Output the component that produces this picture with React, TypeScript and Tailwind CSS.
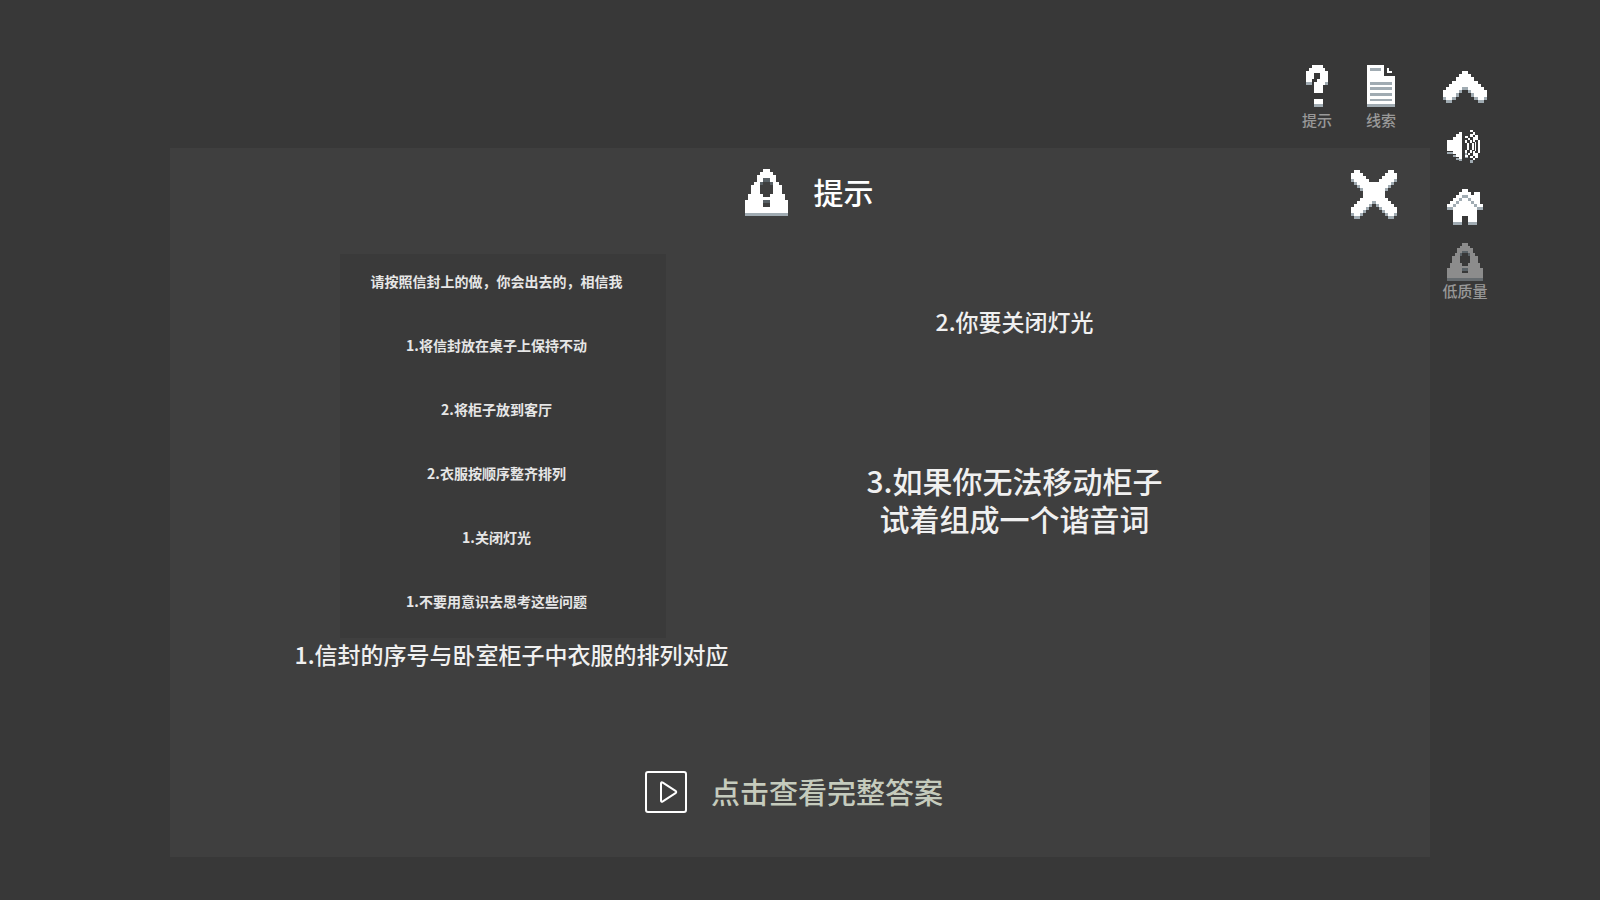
type PixelArtProps = {
  rows: string[];
  className: string;
  main?: string;
  shade?: string;
};

/* Draws a sprite from text rows: "#" is the main colour, "o" the shaded one, "x" the darkest. */
function PixelArt({ rows, className, main = '#ffffff', shade = '#a0abb2' }: PixelArtProps) {
  return (
    <svg
      viewBox={`0 0 ${rows[0].length} ${rows.length}`}
      preserveAspectRatio="none"
      shapeRendering="crispEdges"
      className={className}
      aria-hidden="true"
    >
      {rows.flatMap((row, y) =>
        [...row].map((cell, x) => {
          if (cell === '.') return null;
          const fill = cell === '#' ? main : cell === 'o' ? shade : '#596166';
          return <rect key={`${x}-${y}`} x={x} y={y} width={1} height={1} fill={fill} />;
        }),
      )}
    </svg>
  );
}

const QUESTION = [
  '..####..',
  '.######.',
  '########',
  '###..###',
  '###..###',
  '##..####',
  'oo.####o',
  '...###..',
  '...###..',
  '...###..',
  '........',
  '........',
  '...###..',
  '...###..',
  '...ooo..',
];

const DOCUMENT = [
  '######....',
  '#oooo#.#..',
  '######.##.',
  '######....',
  '##########',
  '##########',
  '#oooooooo#',
  '##########',
  '#oooooooo#',
  '##########',
  '#oooooooo#',
  '##########',
  '#oooooooo#',
  '##########',
  'oooooooooo',
];

const CHEVRON = [
  '......##......',
  '.....####.....',
  '....######....',
  '...########...',
  '..##########..',
  '.#####oo#####.',
  '#####o..o#####',
  '####o....o####',
  'o##o......o##o',
  '.oo........oo.',
];

const HOUSE = [
  '.....##.....',
  '....####.##.',
  '...##oo####.',
  '..##o##o###.',
  '.##o####o##.',
  '##o######o##',
  'oo########oo',
  '..########..',
  '..########..',
  '..###..###..',
  '..###..###..',
  '..ooo..ooo..',
];

const CROSS = [
  '.##.........##.',
  '####.......####',
  '#####.....#####',
  'o#####...#####o',
  '.o###########o.',
  '..o#########o..',
  '...o#######o...',
  '....#######....',
  '....#######....',
  '...#########...',
  '..#####o#####..',
  '.#####o.o#####.',
  '#####o...o#####',
  '####o.....o####',
  'o##o.......o##o',
  '.oo.........oo.',
];

const WARNING = [
  '......##......',
  '.....####.....',
  '....######....',
  '....##xx##....',
  '...##x..x##...',
  '..###....###..',
  '..###....###..',
  '..###....###..',
  '.#####..#####.',
  '.############.',
  '######xx######',
  '######..######',
  '##############',
  '##############',
  'oooooooooooooo',
];

function SpeakerIcon() {
  return (
    <svg viewBox="0 0 33 33" shapeRendering="crispEdges" className="h-[33px] w-[33px]" aria-hidden="true">
      <path
        fill="#ffffff"
        d="M0 10h6v-3h3v-3h3v-2h3v28h-3v-3h-3v-3h-3v-3h-6z"
      />
      <path fill="#a0abb2" d="M0 22h6v2h-6zM6 25h3v2h-3zM9 28h3v2h-3zM12 29h3v2h-3z" />
      <path
        fill="#ffffff"
        d="M18 10h2v3h-2zM20 13h2v7h-2zM18 20h2v3h-2zM18 6h3v2h-3zM21 8h2v2h-2zM23 10h2v3h-2zM25 13h2v7h-2zM23 20h2v3h-2zM21 23h2v2h-2zM18 25h3v2h-3zM23 0h3v2h-3zM26 2h2v3h-2zM28 5h3v5h-3zM31 10h2v13h-2zM28 23h3v5h-3zM26 28h2v2h-2zM23 4h3v3h-3zM26 7h2v5h-2zM28 12h1v9h-1zM26 21h2v5h-2zM23 26h3v2h-3z"
      />
      <path fill="#a0abb2" d="M18 23h2v2h-2zM18 27h3v1h-3zM23 30h3v3h-3z" />
    </svg>
  );
}

function PlayIcon() {
  return (
    <svg viewBox="0 0 42 42" fill="none" stroke="#ffffff" strokeWidth="2" strokeLinejoin="round" className="h-[42px] w-[42px]" aria-hidden="true">
      <rect x="1" y="1" width="40" height="40" rx="2" />
      <path d="M16 12.500Q16 10.500 17.800 11.600L30.500 19.800Q32 21 30.500 22.200L17.800 30.400Q16 31.500 16 29.500Z" />
    </svg>
  );
}

const NOTES = [
  '请按照信封上的做，你会出去的，相信我',
  '1.将信封放在桌子上保持不动',
  '2.将柜子放到客厅',
  '2.衣服按顺序整齐排列',
  '1.关闭灯光',
  '1.不要用意识去思考这些问题',
];

export default function App() {
  return (
    <div className="grid min-h-screen grid-cols-[1fr_170px] bg-[#383838] font-['Noto_Sans_CJK_SC',sans-serif] font-medium text-[#f0f0f0]">
      <div className="flex flex-col pb-[43px] pl-[170px]">
        <nav className="flex h-[148px] items-start justify-end gap-8 pr-[33px] pt-[65px] text-[15px] leading-5 text-[#999999]">
          <button type="button" className="flex w-8 flex-col items-center gap-[3px]">
            <PixelArt rows={QUESTION} className="h-[42px] w-[22px]" />
            <span className="whitespace-nowrap">提示</span>
          </button>
          <button type="button" className="flex w-8 flex-col items-center gap-[3px]">
            <PixelArt rows={DOCUMENT} className="h-[42px] w-7" />
            <span className="whitespace-nowrap">线索</span>
          </button>
        </nav>

        <main className="flex-1 bg-[#3f3f3f]">
          <header className="grid grid-cols-[46px_1fr_46px] items-center px-[33px] pt-[18px]">
            <div className="col-start-2 flex items-center justify-center gap-[26px] pl-[18px]">
              <PixelArt rows={WARNING} className="h-[47px] w-[43px]" />
              <h1 className="pb-1 text-[30px] leading-10 text-white">提示</h1>
            </div>
            <button type="button" aria-label="关闭" className="mt-1">
              <PixelArt rows={CROSS} className="h-[49px] w-[46px]" />
            </button>
          </header>

          <div className="grid grid-cols-2 pl-[90px] pr-[164px] pt-[35px]">
            <section className="flex flex-col items-center text-center">
              <ul className="mr-[18px] w-[326px] bg-[#3a3a3a] pr-3 text-[14px] font-bold text-[#e6e6e6]">
                {NOTES.map((note) => (
                  <li key={note} className="flex h-16 items-center justify-center whitespace-nowrap pb-2.5">
                    {note}
                  </li>
                ))}
              </ul>
              <p className="whitespace-nowrap text-[23px] leading-8">1.信封的序号与卧室柜子中衣服的排列对应</p>
            </section>

            <section className="flex flex-col items-center gap-[124px] pt-[51px] text-center">
              <p className="text-[23px] leading-8">2.你要关闭灯光</p>
              <p className="text-[30px] leading-[38px]">
                3.如果你无法移动柜子
                <br />
                试着组成一个谐音词
              </p>
            </section>
          </div>

          <footer className="flex justify-center pb-[43px] pr-3 pt-[101px]">
            <button type="button" className="flex items-center gap-6 text-[29px] leading-10 text-[#c5cbbd]">
              <PlayIcon />
              <span className="pb-0.5">点击查看完整答案</span>
            </button>
          </footer>
        </main>
      </div>

      <aside className="flex flex-col items-start pt-[71px]">
        <div className="flex w-[70px] flex-col items-center">
          <button type="button" aria-label="收起">
            <PixelArt rows={CHEVRON} className="h-8 w-11" />
          </button>
          <button type="button" aria-label="声音" className="mr-[3px] mt-[27px]">
            <SpeakerIcon />
          </button>
          <button type="button" aria-label="主页" className="mt-[26px]">
            <PixelArt rows={HOUSE} className="h-9 w-9" />
          </button>
          <button type="button" className="mt-[18px] flex flex-col items-center text-[15px] leading-5 text-[#999999]">
            <PixelArt rows={WARNING} main="#8c8c8c" shade="#666c70" className="h-[38px] w-9" />
            <span className="whitespace-nowrap">低质量</span>
          </button>
        </div>
      </aside>
    </div>
  );
}
